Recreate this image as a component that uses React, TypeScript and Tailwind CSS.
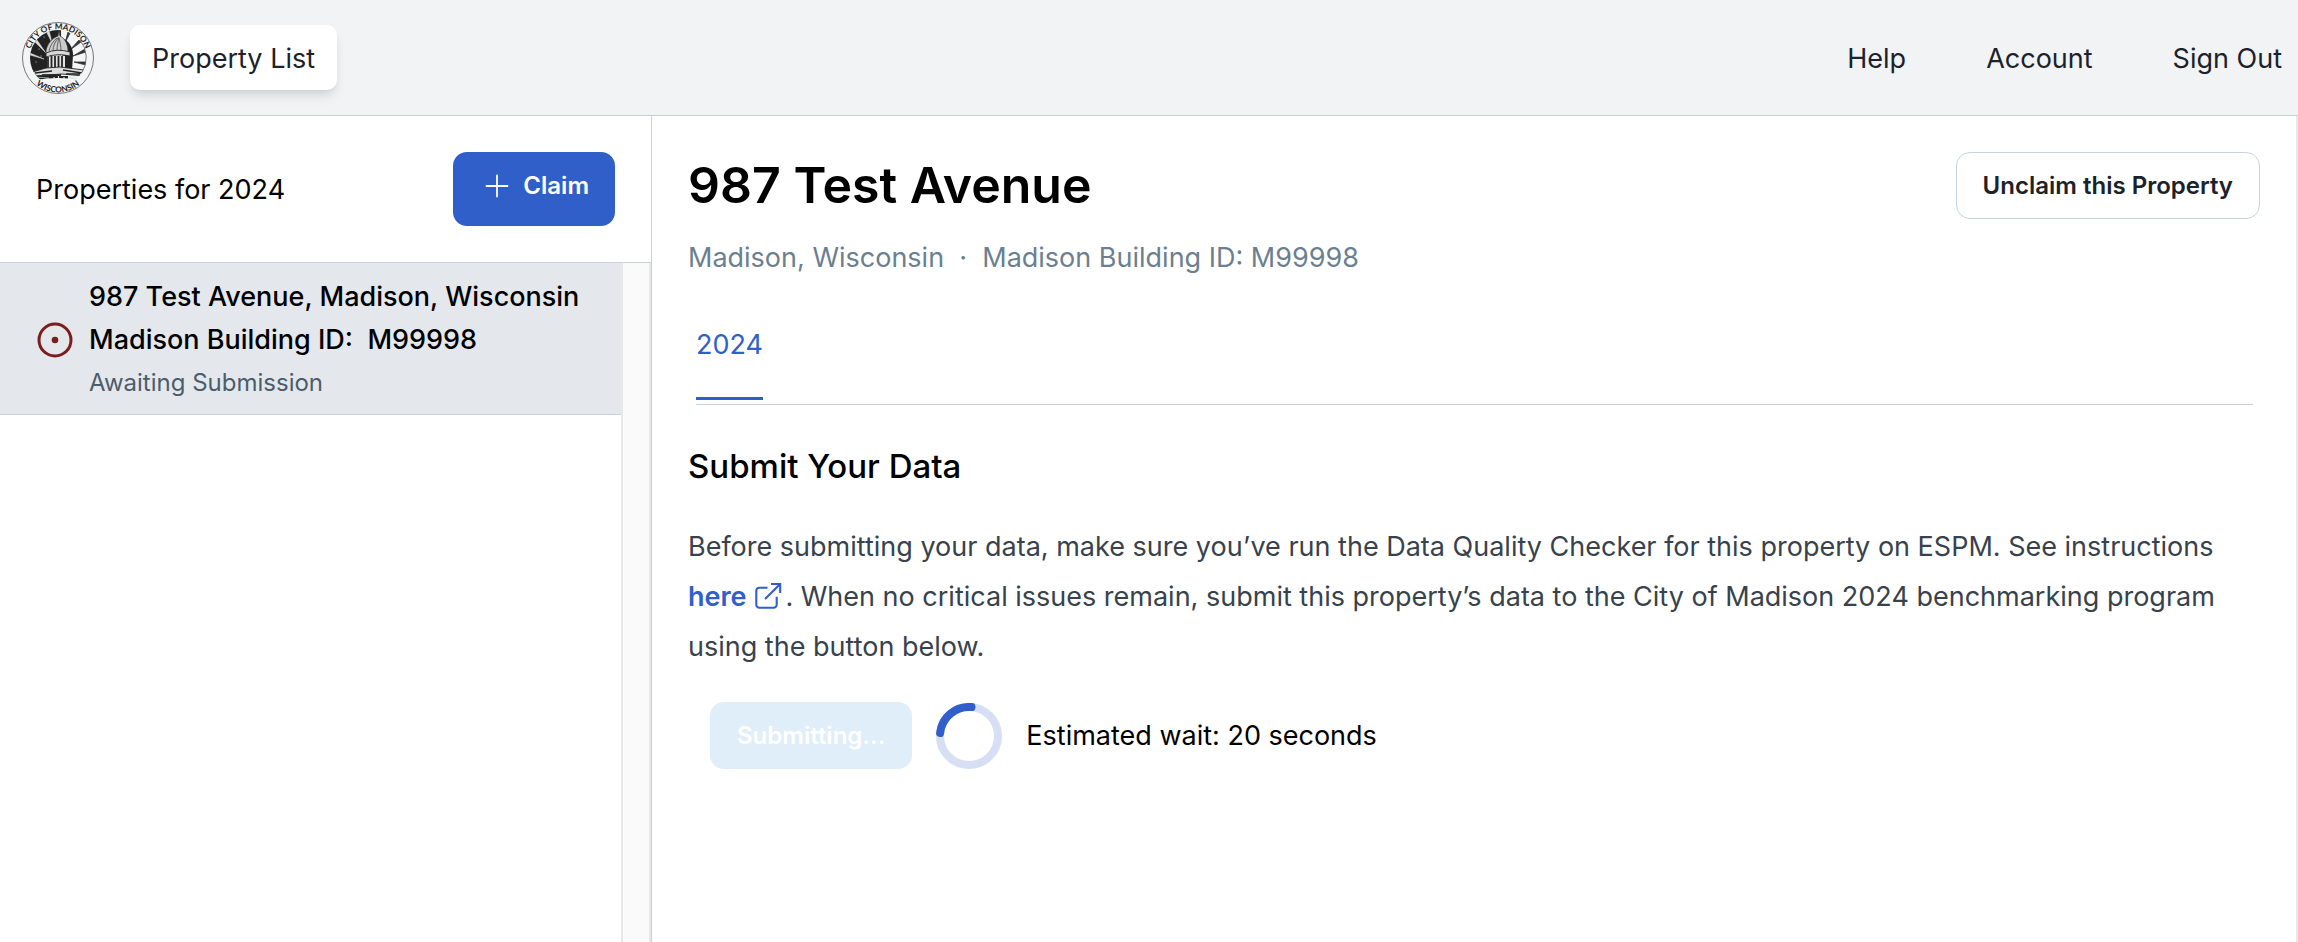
import { Plus } from "lucide-react";

function CitySeal() {
  return (
    <svg viewBox="0 0 72 72" className="size-[72px] shrink-0" role="img" aria-label="City of Madison, Wisconsin">
      <defs>
        <path id="seal-top" d="M7.200 36a28.800 28.800 0 0 1 57.600 0" />
        <path id="seal-bottom" d="M1.600 36a34.400 34.400 0 0 0 68.800 0" />
        <clipPath id="seal-disc">
          <circle cx="36" cy="36" r="28" />
        </clipPath>
      </defs>
      <circle cx="36" cy="36" r="35.500" fill="#f4f5f7" stroke="#555" strokeWidth="0.8" />
      <g clipPath="url(#seal-disc)">
        <path d="M36 7.500A28.500 28.500 0 0 0 20 60q8 5 19 4V8z" fill="#222" />
        <path d="M46 10 43 21 48 11zM57 18 48 28 59 20zM63 27 51 34 64 30zM65 40 52 40 64 43z" fill="#333" stroke="#333" strokeWidth="0.8" />
        <path d="M24 9 30 21 27 8zM13 20 24 31 15 18zM8 33 22 37 8 31z" fill="#ddd" stroke="#ddd" strokeWidth="0.5" />
        <path d="M17 27h.1M14 40h.1M22 15h.1M19 34h.1" stroke="#ccc" strokeWidth="1.2" strokeLinecap="round" />
        <path d="M40 16c7 3 11 9 11 17l-1 16H40z" fill="#222" />
        <path d="M37 8l-1 6c-6 2-11 8-12 15v3h22v-3c0-6-3-13-8-15z" fill="#ccc" stroke="#333" strokeWidth="0.7" />
        <path d="M27 29c1-5 4-10 8-13M31 29c0-5 2-9 5-13M35 29c0-5 1-9 2-14M39 29c0-5-1-9-2-13" fill="none" stroke="#555" strokeWidth="0.9" />
        <path d="M24 31q11-5 24-1v4q-13-3-24 1z" fill="#d8d8d8" stroke="#222" strokeWidth="0.9" />
        <path d="M25 35q9-3 18-1v12H25z" fill="#e4e4e4" />
        <path d="M26 35v12M29.500 34v13M33 34v13M36.500 34v13M40 34v13M44 34v13" stroke="#222" strokeWidth="1.8" />
        <path d="M10 50 24 46l14-1 24 3v6l-22-2-28 2z" fill="#ddd" stroke="#222" strokeWidth="0.9" />
        <path d="M13 51 30 49M41 48l19 3M44 52h14M20 53h14" stroke="#222" strokeWidth="1.3" />
        <path d="M40 54l18 1-6 5H40z" fill="#eee" />
        <path d="M30 54h16v10H30z" fill="#222" />
        <path d="M32 55v8M36.500 54v8M42 55v6M46 55l10 3" stroke="#ddd" strokeWidth="1.2" />
        <path d="M12 55l15 1M15 58l12-1" stroke="#bbb" strokeWidth="0.8" />
      </g>
      <path d="M58 18A28 28 0 0 1 60 50.500" fill="none" stroke="#555" strokeWidth="0.8" />
      <path d="M15 58A31 31 0 0 0 57 58q-9-2-21-2t-21 2z" fill="#f4f5f7" />
      <g fill="#222" fontFamily="Lato, sans-serif" fontSize="8.200" fontWeight="700">
        <text textAnchor="middle"><textPath href="#seal-top" startOffset="50%">CITY OF MADISON</textPath></text>
        <text textAnchor="middle"><textPath href="#seal-bottom" startOffset="50%">WISCONSIN</textPath></text>
      </g>
    </svg>
  );
}

function ExternalIcon() {
  return (
    <svg viewBox="0 0 28 28" fill="none" stroke="currentColor" strokeWidth="2.100" className="mx-0.5 inline size-7 align-[-4px]" aria-hidden="true">
      <path d="M12.500 5.700H4.300a3 3 0 0 0-3 3v14a3 3 0 0 0 3 3h14.400a3 3 0 0 0 3-3v-8" />
      <path d="M16 2h9.200v9M25.200 2 10 17" />
    </svg>
  );
}

function Spinner() {
  return (
    <svg viewBox="0 0 66 66" fill="none" className="size-[66px]" role="status" aria-label="Submitting">
      <circle cx="33" cy="33" r="29" stroke="#d7dff4" strokeWidth="8" />
      <path d="M4.100 30A29 29 0 0 1 35.500 4.100" stroke="#315fc9" strokeWidth="8" strokeLinecap="round" />
    </svg>
  );
}

export default function App() {
  return (
    <div className="flex min-h-screen flex-col bg-white font-['Inter',sans-serif] text-[27px] leading-[43px] text-black">
      <header className="flex h-[116px] items-center justify-between border-b border-[#c9ced6] bg-[#f2f3f5] pr-4 pl-[22px] text-[#1b222b]">
        <div className="flex items-center gap-9">
          <CitySeal />
          <a href="#properties" className="rounded-[10px] bg-white px-[22px] pt-3 pb-[10px] shadow-[0_8px_12px_-2px_rgb(0_0_0/0.1),0_4px_8px_-4px_rgb(0_0_0/0.1)]">
            Property List
          </a>
        </div>
        <nav className="flex gap-20 pt-0.5">
          <a href="#help">Help</a>
          <a href="#account">Account</a>
          <a href="#signout">Sign Out</a>
        </nav>
      </header>

      <div className="flex grow">
        <aside className="flex w-[652px] shrink-0 flex-col border-r border-[#c6d3dd]">
          <div className="flex h-[147px] items-center justify-between border-b border-[#c6d3dd] px-9">
            <h2>Properties for 2024</h2>
            <button className="flex h-[74px] items-start gap-2 rounded-[14px] bg-[#315fc9] px-[26px] pt-[14px] text-[24px] leading-10 font-semibold text-white">
              <Plus className="mt-0.5 size-9" strokeWidth={1.2} />
              Claim
            </button>
          </div>
          <div className="flex grow">
            <ul className="grow">
              <li>
                <a href="#property" className="flex items-center gap-4 border-b border-[#c6d3dd] bg-[#e4e8ec] pt-3 pb-[10px] pl-[37px]">
                  <svg viewBox="0 0 36 36" className="size-9 shrink-0" fill="none" aria-hidden="true">
                    <circle cx="18" cy="18" r="16" stroke="#7c1d1d" strokeWidth="3" />
                    <circle cx="18" cy="18" r="3.300" fill="#7c1d1d" />
                  </svg>
                  <span className="flex flex-col font-medium">
                    <span>987 Test Avenue, Madison, Wisconsin</span>
                    <span>Madison Building ID:&nbsp; M99998</span>
                    <span className="text-[24px] font-normal text-[#4b5d6b]">Awaiting Submission</span>
                  </span>
                </a>
              </li>
            </ul>
            <div className="w-[30px] shrink-0 border-x-2 border-[#e8e8e8] bg-[#fafafa]" />
          </div>
        </aside>

        <main className="grow border-r-2 border-[#e8e8e8] px-9 pt-9">
          <div className="flex items-start justify-between">
            <div>
              <h1 className="text-[50px] leading-[66px] font-semibold">987 Test Avenue</h1>
              <p className="mt-[18px] text-[#6b7f90]">Madison, Wisconsin &nbsp;·&nbsp; Madison Building ID: M99998</p>
            </div>
            <button className="rounded-[14px] border border-[#c6d3dd] px-[26px] py-[11px] text-[24px] font-semibold text-[#1b222b]">
              Unclaim this Property
            </button>
          </div>
          <div className="ml-2 mr-[7px] mt-11 flex border-b border-[#c6d3dd] pb-1">
            <button className="border-b-3 border-[#315fc9] pb-[31px] text-[#315fc9]">2024</button>
          </div>
          <h2 className="mt-10 text-[33px] font-medium">Submit Your Data</h2>
          <p className="mt-[34px] leading-[50px] text-[#37424d]">
            Before submitting your data, make sure you’ve run the Data Quality Checker for this property on ESPM. See instructions{" "}
            <a href="#instructions" className="font-semibold text-[#315fc9]">
              here <ExternalIcon />
            </a>
            . When no critical issues remain, submit this property’s data to the City of Madison 2024 benchmarking program using the button below.
          </p>
          <div className="mt-[30px] flex items-center gap-6 pl-[22px]">
            <button disabled className="rounded-[14px] bg-[#e0eef9] px-[27px] py-3 text-[24px] font-semibold text-white">Submitting...</button>
            <Spinner />
            <p>Estimated wait: 20 seconds</p>
          </div>
        </main>
      </div>
    </div>
  );
}
